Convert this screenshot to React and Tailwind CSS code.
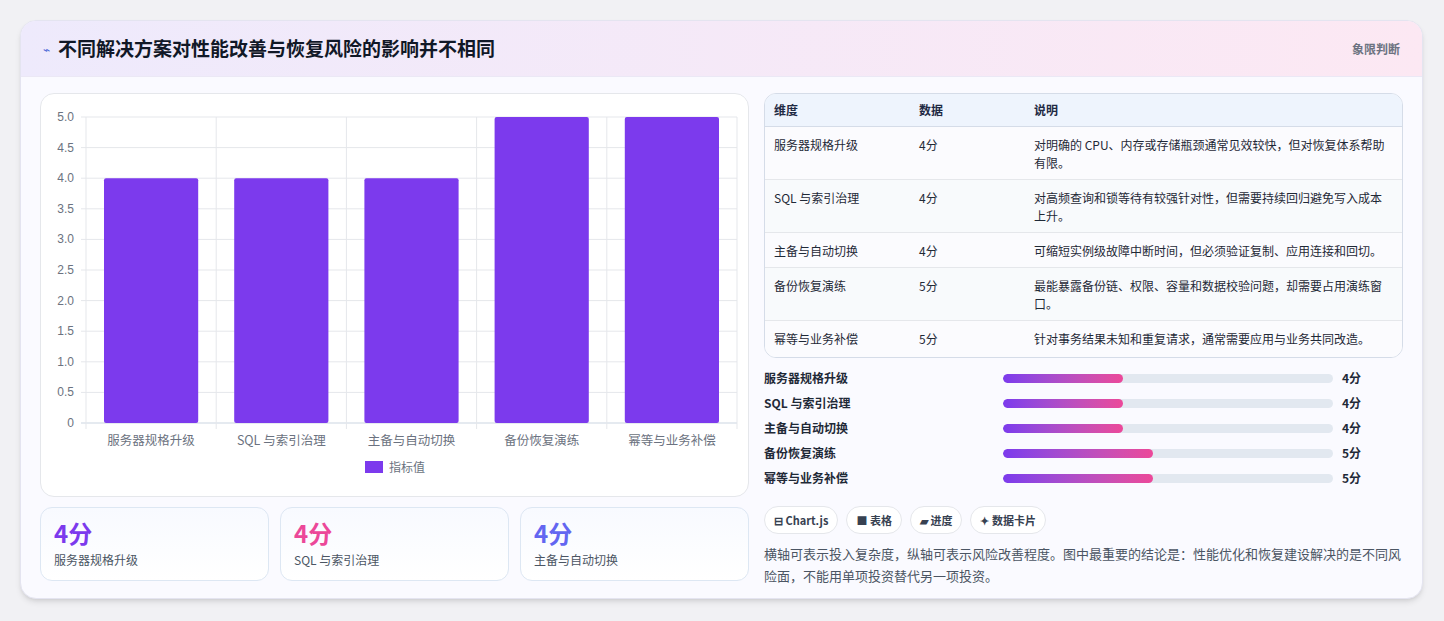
import React from "react";

const cats = ["服务器规格升级", "SQL 与索引治理", "主备与自动切换", "备份恢复演练", "幂等与业务补偿"];
const vals = [4, 4, 4, 5, 5];
const rows = [
  ["服务器规格升级", "4分", "对明确的 CPU、内存或存储瓶颈通常见效较快，但对恢复体系帮助有限。", 53],
  ["SQL 与索引治理", "4分", "对高频查询和锁等待有较强针对性，但需要持续回归避免写入成本上升。", 53],
  ["主备与自动切换", "4分", "可缩短实例级故障中断时间，但必须验证复制、应用连接和回切。", 35],
  ["备份恢复演练", "5分", "最能暴露备份链、权限、容量和数据校验问题，却需要占用演练窗口。", 53],
  ["幂等与业务补偿", "5分", "针对事务结果未知和重复请求，通常需要应用与业务共同改造。", 36],
];

function Chart() {
  const W = 708, H = 403;
  const x0 = 45, x1 = 696, yTop = 23, yBot = 329;
  const ticks = [5, 4.5, 4, 3.5, 3, 2.5, 2, 1.5, 1, 0.5, 0];
  const cw = (x1 - x0) / 5;
  return (
    <svg width={W} height={H} className="block">
      {ticks.map((t) => {
        const y = yBot - (t / 5) * (yBot - yTop);
        return (
          <g key={t}>
            <line x1={x0 - 5} x2={x1} y1={y} y2={y} stroke={t === 0 ? "#cbd5e1" : "#e5e7eb"} />
            <text x={x0 - 12} y={y + 4} textAnchor="end" fontSize="12" fill="#6b7280" fontFamily="Liberation Sans, sans-serif">{t === 0 ? "0" : t.toFixed(1)}</text>
          </g>
        );
      })}
      {[0, 1, 2, 3, 4, 5].map((i) => (
        <line key={i} x1={x0 + i * cw} x2={x0 + i * cw} y1={yTop} y2={yBot + 6} stroke="#e5e7eb" />
      ))}
      {vals.map((v, i) => {
        const h = (v / 5) * (yBot - yTop);
        return <rect key={i} x={x0 + i * cw + 18} y={yBot - h} width={cw - 36} height={h} fill="#7c3aed" rx="2" />;
      })}
      {cats.map((c, i) => (
        <text key={c} x={x0 + i * cw + cw / 2} y={351} textAnchor="middle" fontSize="12.5" fill="#6b7280" fontFamily="Noto Sans CJK SC, sans-serif">{c}</text>
      ))}
      <rect x={324} y={367} width={18} height={12} fill="#7c3aed" />
      <text x={348} y={378} fontSize="12" fill="#6b7280" fontFamily="Noto Sans CJK SC, sans-serif">指标值</text>
    </svg>
  );
}

export default function App() {
  return (
    <div className="w-[1444px] h-[621px] bg-[#f1f1f4] pt-[20px] pl-[20px]" style={{ fontFamily: '"Noto Sans CJK SC", "Noto Sans", sans-serif' }}>
      <div className="w-[1403px] h-[579px] rounded-[16px] bg-[#fafaff] border border-[#e4e4f0] shadow-md overflow-hidden">
        <div className="h-[56px] flex items-center justify-between px-[22px] bg-gradient-to-r from-[#eeeafc] to-[#fce8f3] border-b border-[#ebe8f5]">
          <div className="flex items-center gap-[8px]">
            <span className="text-[#4f6bd8] text-[12px]">⌁</span>
            <span className="text-[19px] font-bold text-[#111827]">不同解决方案对性能改善与恢复风险的影响并不相同</span>
          </div>
          <span className="text-[12px] font-semibold text-[#6b7280]">象限判断</span>
        </div>
        <div className="flex gap-[15px] px-[19px] pt-[16px]">
          <div className="w-[709px] flex flex-col gap-[10px]">
            <div className="h-[404px] rounded-[14px] border border-[#e5e7eb] bg-white">
              <Chart />
            </div>
            <div className="grid grid-cols-3 gap-[11px]">
              {[["#7c3aed", "服务器规格升级"], ["#ec4899", "SQL 与索引治理"], ["#6366f1", "主备与自动切换"]].map(([c, l]) => (
                <div key={l} className="h-[74px] rounded-[12px] border border-[#dde7f3] bg-gradient-to-b from-[#f8faff] to-white px-[13px] pt-[9px]">
                  <div className="text-[24px] font-bold leading-[32px]" style={{ color: c }}>4分</div>
                  <div className="text-[12px] text-[#4b5563] mt-[2px]">{l}</div>
                </div>
              ))}
            </div>
          </div>
          <div className="w-[642px] flex flex-col">
            <div className="rounded-[12px] border border-[#d5dce8] overflow-hidden bg-white">
              <div className="h-[33px] flex items-center bg-[#eef4fd] text-[12px] font-semibold text-[#1f2a44] border-b border-[#d5dce8]">
                <div className="w-[154px] pl-[9px]">维度</div>
                <div className="w-[115px]">数据</div>
                <div>说明</div>
              </div>
              {rows.map(([a, b, c, h], i) => (
                <div key={a} className={`flex items-start text-[12px] text-[#1f2937] border-b border-[#e5e7eb] last:border-b-0 ${i % 2 ? "bg-[#f8fafc]" : "bg-[#fbfbfe]"}`} style={{ height: h }}>
                  <div className="w-[154px] pl-[9px] pt-[9px]">{a}</div>
                  <div className="w-[115px] pt-[9px]">{b}</div>
                  <div className="flex-1 pr-[10px] pt-[9px] leading-[18px]">{c}</div>
                </div>
              ))}
            </div>
            <div className="flex flex-col gap-[7px] mt-[11px]">
              {rows.map(([a, , , ], i) => (
                <div key={a} className="flex items-center h-[18px] text-[12px] font-semibold text-[#1f2937]">
                  <div className="w-[239px]">{a}</div>
                  <div className="w-[330px] h-[9px] rounded-full bg-[#e2e8f0] overflow-hidden">
                    <div className="h-full rounded-full bg-gradient-to-r from-[#7c3aed] to-[#ec4899]" style={{ width: vals[i] === 5 ? 150 : 120 }} />
                  </div>
                  <div className="ml-[9px]">{vals[i]}分</div>
                </div>
              ))}
            </div>
            <div className="flex gap-[8px] mt-[19px]">
              {["⊟ Chart.js", "■ 表格", "▰ 进度", "✦ 数据卡片"].map((t) => (
                <span key={t} className="h-[28px] px-[9px] rounded-full border border-[#e5e7eb] bg-white text-[11px] font-semibold text-[#374151] flex items-center">{t}</span>
              ))}
            </div>
            <p className="mt-[9px] text-[13px] leading-[22px] text-[#4b5563]">横轴可表示投入复杂度，纵轴可表示风险改善程度。图中最重要的结论是：性能优化和恢复建设解决的是不同风险面，不能用单项投资替代另一项投资。</p>
          </div>
        </div>
      </div>
    </div>
  );
}
